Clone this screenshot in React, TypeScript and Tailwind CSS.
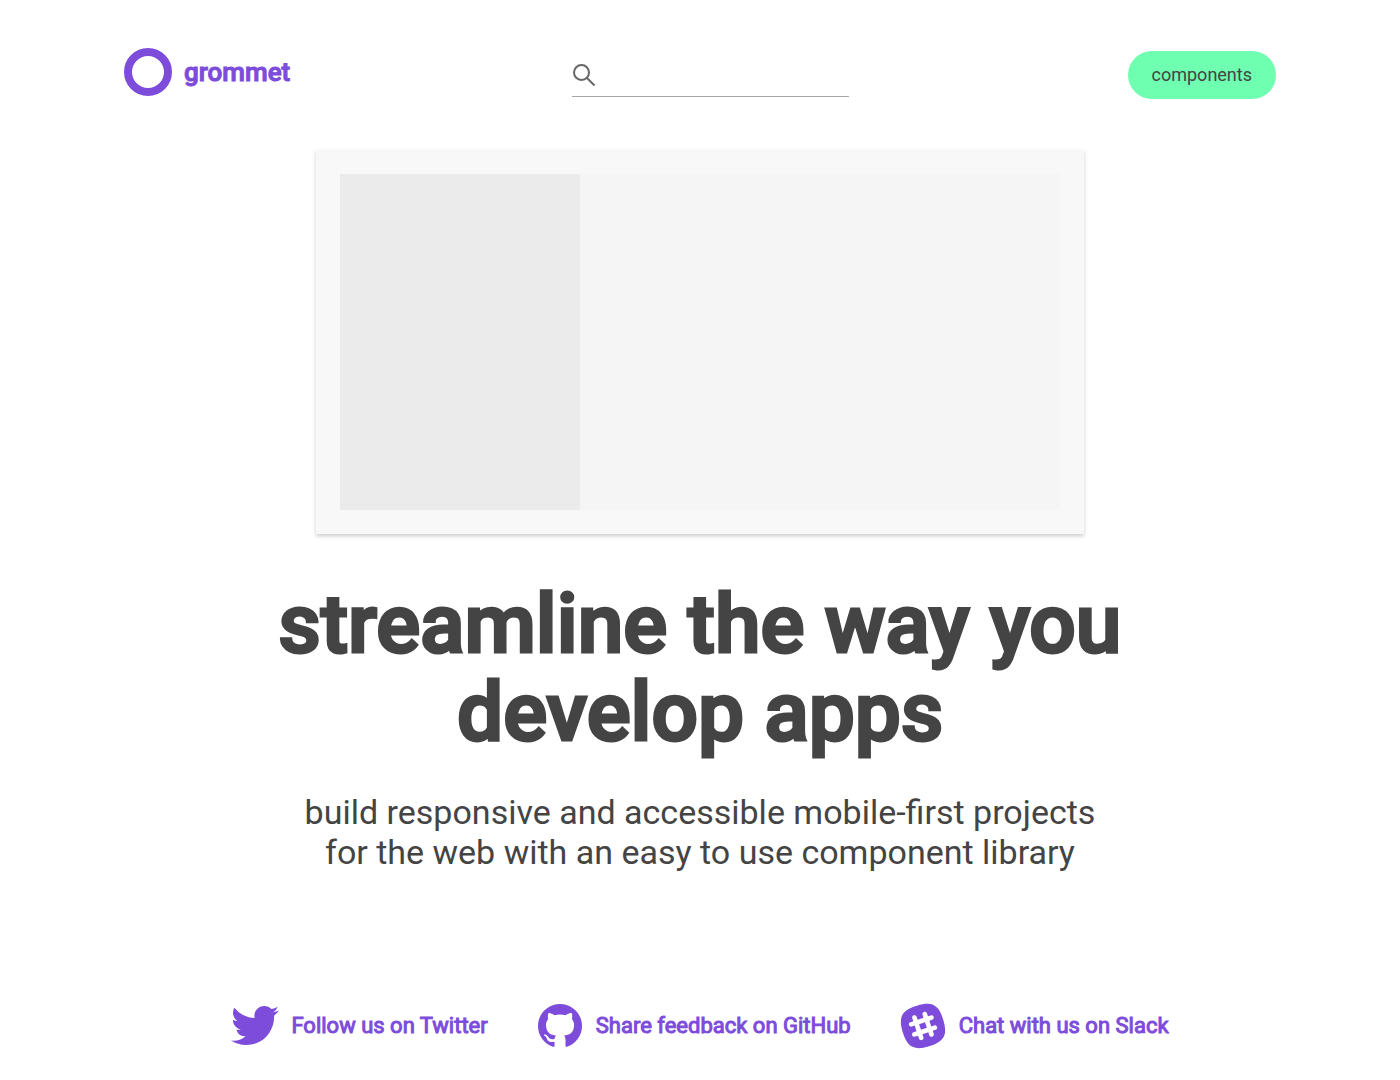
import React from "react";

const twitter =
  "M24 4.308a9.83 9.83 0 0 1-2.828.775 4.94 4.94 0 0 0 2.165-2.724 9.865 9.865 0 0 1-3.127 1.195A4.916 4.916 0 0 0 16.616 2c-3.179 0-5.515 2.966-4.797 6.045A13.978 13.978 0 0 1 1.671 2.9a4.93 4.93 0 0 0 1.523 6.574 4.903 4.903 0 0 1-2.229-.616c-.054 2.281 1.581 4.415 3.949 4.89a4.935 4.935 0 0 1-2.224.084 4.928 4.928 0 0 0 4.6 3.419A9.9 9.9 0 0 1 0 19.292a13.94 13.94 0 0 0 7.548 2.212c9.142 0 14.307-7.721 13.995-14.646A10.025 10.025 0 0 0 24 4.308z";
const github =
  "M12 1C5.923 1 1 5.923 1 12c0 4.867 3.149 8.979 7.521 10.436.55.096.756-.233.756-.522 0-.262-.013-1.128-.013-2.049-2.764.509-3.479-.674-3.699-1.292-.124-.317-.66-1.293-1.127-1.554-.385-.207-.936-.715-.014-.729.866-.014 1.485.797 1.691 1.128.99 1.663 2.571 1.196 3.204.907.096-.715.385-1.196.701-1.471-2.448-.275-5.005-1.224-5.005-5.432 0-1.196.426-2.186 1.128-2.956-.111-.275-.496-1.402.11-2.915 0 0 .921-.288 3.024 1.128a10.193 10.193 0 0 1 2.75-.371c.936 0 1.871.123 2.75.371 2.104-1.43 3.025-1.128 3.025-1.128.605 1.513.221 2.64.111 2.915.701.77 1.127 1.747 1.127 2.956 0 4.222-2.571 5.157-5.019 5.432.399.344.743 1.004.743 2.035 0 1.471-.014 2.654-.014 3.025 0 .289.206.632.756.522C19.851 20.979 23 16.854 23 12c0-6.077-4.922-11-11-11z";
const slack =
  "M9.879 10.995l1.035 3.085 3.205-1.074-1.035-3.074-3.205 1.08v-.017zM18.824 14.055l-1.555.521.54 1.61c.218.65-.135 1.355-.786 1.574-.15.045-.285.067-.435.063-.511-.015-.976-.338-1.155-.849l-.54-1.607-3.21 1.073.539 1.608c.211.652-.135 1.358-.794 1.575-.15.048-.285.067-.435.064-.51-.015-.976-.34-1.156-.85l-.539-1.619-1.561.524c-.15.045-.285.061-.435.061-.511-.016-.976-.345-1.155-.855-.225-.66.135-1.364.78-1.575l1.56-.525L7.5 11.76l-1.551.525c-.141.048-.285.066-.428.064-.495-.016-.975-.338-1.141-.848-.209-.65.135-1.354.796-1.574l1.56-.52-.54-1.605c-.21-.654.136-1.359.796-1.575.659-.22 1.363.136 1.574.783l.539 1.608L12.3 7.544l-.54-1.605c-.209-.645.135-1.35.789-1.574.652-.211 1.359.135 1.575.791l.54 1.621 1.555-.51c.651-.219 1.356.135 1.575.779.218.654-.135 1.359-.784 1.575l-1.557.524 1.035 3.086 1.551-.516c.652-.211 1.358.135 1.575.795.22.66-.135 1.365-.779 1.574l-.011-.029zm4.171-5.356C20.52.456 16.946-1.471 8.699 1.005.456 3.479-1.471 7.051 1.005 15.301c2.475 8.245 6.046 10.17 14.296 7.694 8.245-2.475 10.17-6.046 7.694-14.296z";

const links = [
  { label: "Follow us on Twitter", viewBox: "0 0 24 24", path: twitter },
  { label: "Share feedback on GitHub", viewBox: "0 0 24 24", path: github },
  { label: "Chat with us on Slack", viewBox: "-1 -1 26 26", path: slack },
];

export default function App() {
  return (
    <div className="min-h-screen bg-white px-6 pb-7 font-['Roboto',sans-serif] text-[#444444]">
      <header className="mx-auto flex max-w-6xl items-center justify-between gap-6 pt-12">
        <a
          href="#home"
          className="flex items-center gap-3 pr-1 pb-[6px] text-[26px] leading-12 font-medium text-[#7d4cdb] [-webkit-text-stroke:1px]"
        >
          <svg viewBox="0 0 24 24" className="size-12" fill="none" stroke="currentColor" strokeWidth="4" aria-hidden="true">
            <circle cx="12" cy="12" r="10" />
          </svg>
          grommet
        </a>
        <label className="flex h-11 w-[277px] items-center border-b border-[#a6a6a6]">
          <svg viewBox="0 0 24 24" className="size-6 shrink-0" fill="none" stroke="#666666" strokeWidth="2" aria-hidden="true">
            <circle cx="9.5" cy="9.5" r="7.5" />
            <path d="M15 15l7.5 7.5" />
          </svg>
          <input type="search" aria-label="Search" className="min-w-0 flex-1 bg-transparent px-3 text-lg outline-none" />
        </label>
        <a href="#components" className="rounded-full bg-[#6fffb0] px-6 py-3 text-lg leading-6">
          components
        </a>
      </header>

      <main className="mx-auto mt-12 flex max-w-4xl flex-col items-center text-center">
        <div className="flex h-96 w-full max-w-3xl bg-[#f8f8f8] p-6 shadow-[0px_2px_4px_rgba(0,0,0,0.2)]">
          <div className="w-1/3 bg-[#ebebeb]" />
          <div className="flex-1 bg-[#f5f5f5]" />
        </div>
        <h1 className="mt-[46px] text-[82px] leading-[88px] font-medium [-webkit-text-stroke:3px]">
          streamline the way you develop apps
        </h1>
        <p className="mt-9 max-w-[816px] text-[34px] leading-10">
          build responsive and accessible mobile-first projects for the web with an easy to use component library
        </p>
      </main>

      <footer className="mt-[130px] flex flex-wrap justify-center gap-12">
        {links.map((link) => (
          <a
            key={link.label}
            href="#community"
            className="flex items-center gap-3 text-[22px] leading-7 text-[#7d4cdb] [-webkit-text-stroke:1px]"
          >
            <svg viewBox={link.viewBox} className="size-12" fill="currentColor" aria-hidden="true">
              <path d={link.path} fillRule="evenodd" stroke="none" />
            </svg>
            {link.label}
          </a>
        ))}
      </footer>
    </div>
  );
}
